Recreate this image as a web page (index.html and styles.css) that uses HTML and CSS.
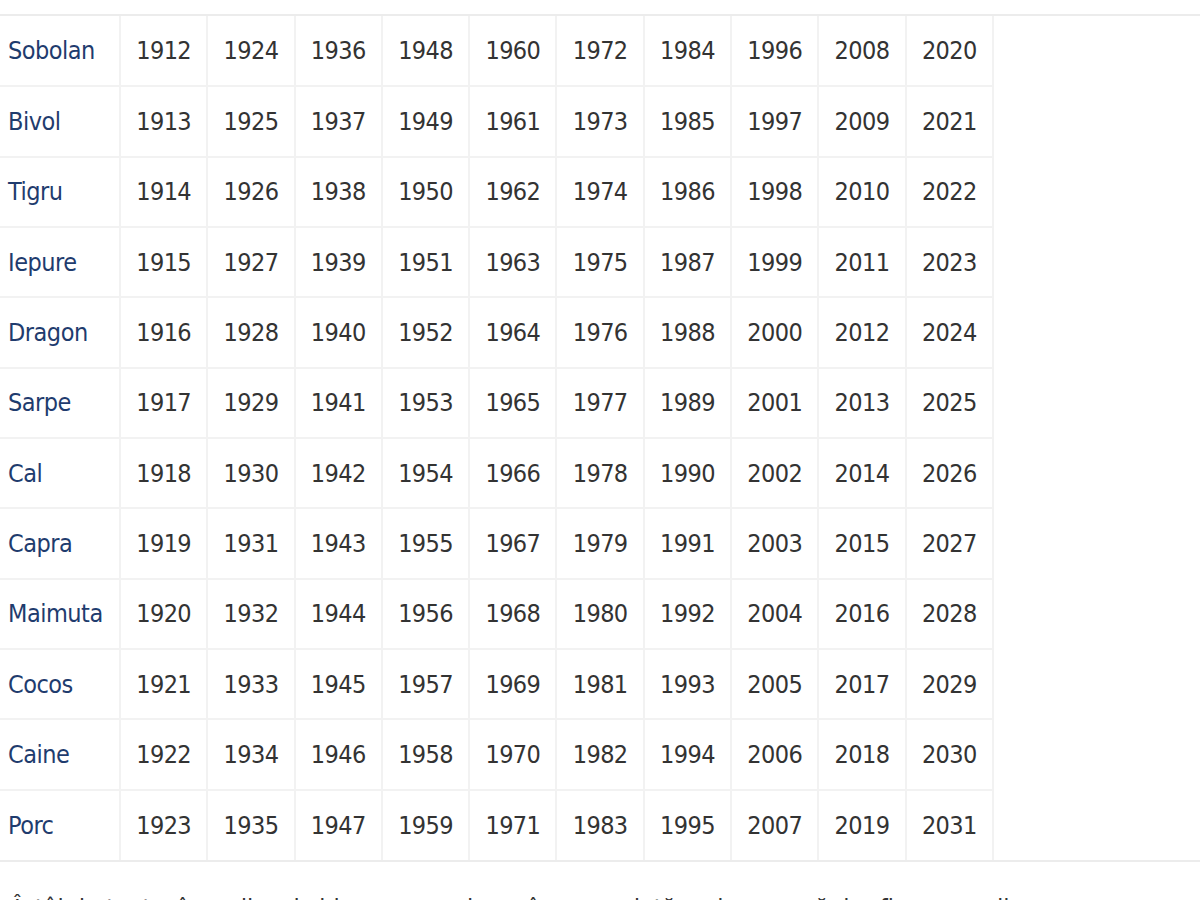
FILE: index.html
```html
<!DOCTYPE html>
<html lang="ro">
<head>
<meta charset="utf-8">
<title>Zodiac chinezesc</title>
<link rel="stylesheet" href="styles.css">
</head>
<body>
<div class="wrap">
  <table class="zodiac">
    <tbody>
      <tr><td class="name">Sobolan</td><td>1912</td><td>1924</td><td>1936</td><td>1948</td><td>1960</td><td>1972</td><td>1984</td><td>1996</td><td>2008</td><td>2020</td></tr>
      <tr><td class="name">Bivol</td><td>1913</td><td>1925</td><td>1937</td><td>1949</td><td>1961</td><td>1973</td><td>1985</td><td>1997</td><td>2009</td><td>2021</td></tr>
      <tr><td class="name">Tigru</td><td>1914</td><td>1926</td><td>1938</td><td>1950</td><td>1962</td><td>1974</td><td>1986</td><td>1998</td><td>2010</td><td>2022</td></tr>
      <tr><td class="name">Iepure</td><td>1915</td><td>1927</td><td>1939</td><td>1951</td><td>1963</td><td>1975</td><td>1987</td><td>1999</td><td>2011</td><td>2023</td></tr>
      <tr><td class="name">Dragon</td><td>1916</td><td>1928</td><td>1940</td><td>1952</td><td>1964</td><td>1976</td><td>1988</td><td>2000</td><td>2012</td><td>2024</td></tr>
      <tr><td class="name">Sarpe</td><td>1917</td><td>1929</td><td>1941</td><td>1953</td><td>1965</td><td>1977</td><td>1989</td><td>2001</td><td>2013</td><td>2025</td></tr>
      <tr><td class="name">Cal</td><td>1918</td><td>1930</td><td>1942</td><td>1954</td><td>1966</td><td>1978</td><td>1990</td><td>2002</td><td>2014</td><td>2026</td></tr>
      <tr><td class="name">Capra</td><td>1919</td><td>1931</td><td>1943</td><td>1955</td><td>1967</td><td>1979</td><td>1991</td><td>2003</td><td>2015</td><td>2027</td></tr>
      <tr><td class="name">Maimuta</td><td>1920</td><td>1932</td><td>1944</td><td>1956</td><td>1968</td><td>1980</td><td>1992</td><td>2004</td><td>2016</td><td>2028</td></tr>
      <tr><td class="name">Cocos</td><td>1921</td><td>1933</td><td>1945</td><td>1957</td><td>1969</td><td>1981</td><td>1993</td><td>2005</td><td>2017</td><td>2029</td></tr>
      <tr><td class="name">Caine</td><td>1922</td><td>1934</td><td>1946</td><td>1958</td><td>1970</td><td>1982</td><td>1994</td><td>2006</td><td>2018</td><td>2030</td></tr>
      <tr><td class="name">Porc</td><td>1923</td><td>1935</td><td>1947</td><td>1959</td><td>1971</td><td>1983</td><td>1995</td><td>2007</td><td>2019</td><td>2031</td></tr>
    </tbody>
  </table>
</div>
<p class="note">Întâi de toate, în zodiacul chinezesc anul nou începe odată cu luna nouă, iar fiecare zodie are calități și defecte proprii.</p>
</body>
</html>
```
FILE: styles.css
```css
html, body {
  margin: 0;
  padding: 0;
  background: #ffffff;
}

body {
  font-family: "DejaVu Sans Condensed", "DejaVu Sans", sans-serif;
  font-stretch: condensed;
  color: #333333;
  overflow: hidden;
}

.wrap {
  margin-top: 14px;
  border-top: 2px solid #ececec;
  border-bottom: 2px solid #ececec;
}

.zodiac {
  border-collapse: collapse;
  table-layout: fixed;
  width: 993px;
  font-size: 25px;
  letter-spacing: -0.6px;
}

.zodiac td {
  height: 70.33px;
  padding: 0;
  border: 2px solid #f2f2f2;
  text-align: center;
  vertical-align: middle;
  width: 87.3px;
  box-sizing: border-box;
  color: #333333;
}

.zodiac tr:first-child td {
  border-top: none;
}

.zodiac tr:last-child td {
  border-bottom: none;
}

.zodiac td:first-child {
  border-left: none;
}

.zodiac td.name {
  width: 120px;
  text-align: left;
  padding-left: 8px;
  color: #1f3c6e;
  letter-spacing: -0.5px;
}

.note {
  margin: 0;
  padding: 27px 100px 0 14px;
  font-size: 25px;
  line-height: 40px;
  color: #333333;
}
```
